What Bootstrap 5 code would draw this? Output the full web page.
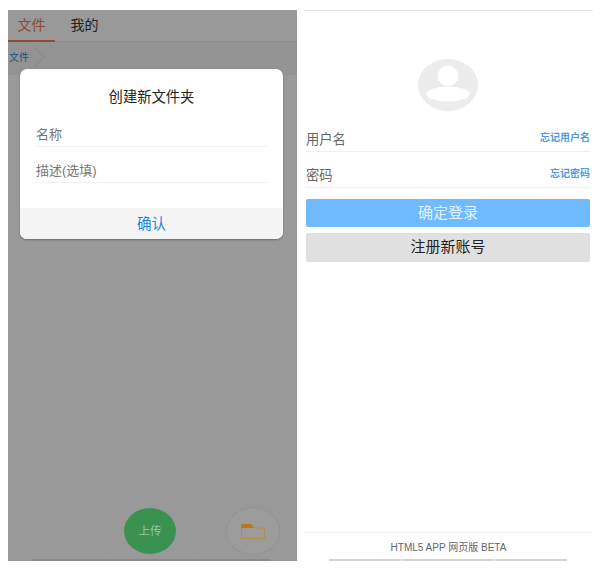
<!DOCTYPE html>
<html>
  <head>
    <title>Login</title>
    <link href="https://cdn.jsdelivr.net/npm/bootstrap@5.3.3/dist/css/bootstrap.min.css" rel="stylesheet">
    <style>
      html, body { height: 570px; overflow: hidden; background: #fff; }
      body { font-family: "Liberation Sans", "Noto Sans CJK SC", sans-serif; }

      .screens { padding: 10px 7px 9px 8px; height: 570px; gap: 7px; }
      .screen { width: 289px; height: 551px; position: relative; }

      /* left screen, dimmed by the dialog */
      .screen-files { background: #999; overflow: hidden; }
      .tabs { height: 32px; border-bottom: 1px solid #8c8c8c; }
      .tab-item { font-size: 14px; color: #222; width: 47px; margin-right: 2px; text-align: center; line-height: 31px; height: 32px; }
      .tab-item.active { color: #8e4a33; border-bottom: 2px solid #93492f; }
      .crumbs { height: 33px; background: #939393; font-size: 10px; color: #1d4f86; padding-left: 1px; padding-top: 8px; }
      .chevron { margin-top: -4px; margin-left: 4px; }

      .dialog { position: absolute; left: 12px; top: 59px; width: 263px; height: 170px; background: #fff; border-radius: 7px; box-shadow: 0 1px 2px rgba(0,0,0,.3); overflow: hidden; }
      .dialog-title { font-size: 14.3px; line-height: 20px; color: #222; text-align: center; padding-top: 18px; height: 38px; }
      .dialog-field { margin: 0 15px 0 16px; height: 36px; border-bottom: 1px solid #f1f1f1; font-size: 13px; color: #777; line-height: 18px; padding-top: 15px; }
      .dialog-field.first { height: 40px; padding-top: 19px; }
      .dialog-ok { position: absolute; left: 0; right: 0; bottom: 0; height: 31px; background: #f4f4f4; color: #1a86de; font-size: 14.5px; line-height: 32px; text-align: center; }

      .fab { position: absolute; top: 498px; width: 52px; height: 46px; border-radius: 50%; }
      .fab-upload { left: 116px; background: #3b9150; color: #9cc5a5; font-size: 11.5px; line-height: 46px; text-align: center; }
      .fab-folder { left: 219px; background: #9c9c9c; box-shadow: 0 0 2px rgba(0,0,0,.12); }

      /* home indicator bars at the foot of both screens */
      .bars { position: absolute; bottom: 0; left: 24px; width: 238px; height: 2px; gap: 1px; }
      .bars span { background: #8a8a8a; }
      .screen-login .bars { left: 25px; }
      .screen-login .bars span { background: #d4d4d4; }
      .bars span:nth-child(1) { width: 72px; }
      .bars span:nth-child(2) { width: 92px; }
      .bars span:nth-child(3) { width: 72px; }

      /* right screen */
      .screen-login { border-top: 1px solid #e4e4e4; background: #fff; }
      .avatar { display: block; margin: 48px 0 0 114px; }
      .login-form { padding: 0 3px 0 2px; }
      .login-field { height: 36px; padding-top: 12px; border-bottom: 1px solid #efefef; font-size: 13.3px; color: #666; }
      .login-field.first { margin-top: 4px; height: 37px; padding-top: 13px; }
      .login-field .hint { font-size: 10px; font-weight: 700; color: #4a9ce4; margin-top: -5px; }
      .btn-login, .btn-register { display: block; width: 100%; border: 0; border-radius: 2px; padding: 0; font-size: 15px; }
      .btn-login { height: 28px; margin-top: 11px; background: #70baff; color: #e4f2ff; }
      .btn-register { height: 29px; margin-top: 6px; background: #e0e0e0; color: #222; }
      .login-foot { position: absolute; left: 0; right: 0; top: 521px; border-top: 1px solid #efefef; text-align: center; font-size: 10px; color: #666; padding-top: 7px; }
    </style>
    <script src="https://cdn.jsdelivr.net/npm/bootstrap@5.3.3/dist/js/bootstrap.bundle.min.js"></script>
  </head>
  <body>
    <div class="screens d-flex">
      <!-- Files screen with the new folder dialog -->
      <div class="screen screen-files">
        <div class="tabs d-flex">
          <div class="tab-item active">文件</div>
          <div class="tab-item ms-1">我的</div>
        </div>
        <div class="crumbs d-flex">
          <span>文件</span>
          <svg class="chevron" width="12" height="22" viewBox="0 0 12 22"><path d="M0.5 0.5 L11 11 L0.5 21.5" fill="none" stroke="#858585" stroke-width="1"/></svg>
        </div>

        <div class="dialog">
          <div class="dialog-title">创建新文件夹</div>
          <div class="dialog-field first">名称</div>
          <div class="dialog-field">描述(选填)</div>
          <div class="dialog-ok">确认</div>
        </div>

        <div class="fab fab-upload">上传</div>
        <div class="fab fab-folder d-flex align-items-center justify-content-center">
          <svg width="24" height="15" viewBox="0 0 24 15">
            <path d="M0.5 0.5 H10 L12 4 H23.5 V14.5 H0.5 Z" fill="none" stroke="#b28f4e" stroke-width="1"/>
            <path d="M0 0 H10.5 L12.8 4 H0 Z" fill="#b8791a"/>
          </svg>
        </div>
        <div class="bars d-flex"><span></span><span></span><span></span></div>
      </div>

      <!-- Login screen -->
      <div class="screen screen-login">
        <svg class="avatar" width="60" height="52" viewBox="0 0 60 52">
          <ellipse cx="30" cy="26" rx="30" ry="26" fill="#ececec"/>
          <ellipse cx="30" cy="17" rx="10.5" ry="10" fill="#fff"/>
          <ellipse cx="30" cy="35" rx="21.5" ry="7.5" fill="#fff"/>
        </svg>
        <div class="login-form">
          <div class="login-field first d-flex justify-content-between align-items-center"><span>用户名</span><span class="hint">忘记用户名</span></div>
          <div class="login-field d-flex justify-content-between align-items-center"><span>密码</span><span class="hint">忘记密码</span></div>
          <button class="btn-login">确定登录</button>
          <button class="btn-register">注册新账号</button>
        </div>
        <div class="login-foot">HTML5 APP 网页版 BETA</div>
        <div class="bars d-flex"><span></span><span></span><span></span></div>
      </div>
    </div>
  </body>
</html>
